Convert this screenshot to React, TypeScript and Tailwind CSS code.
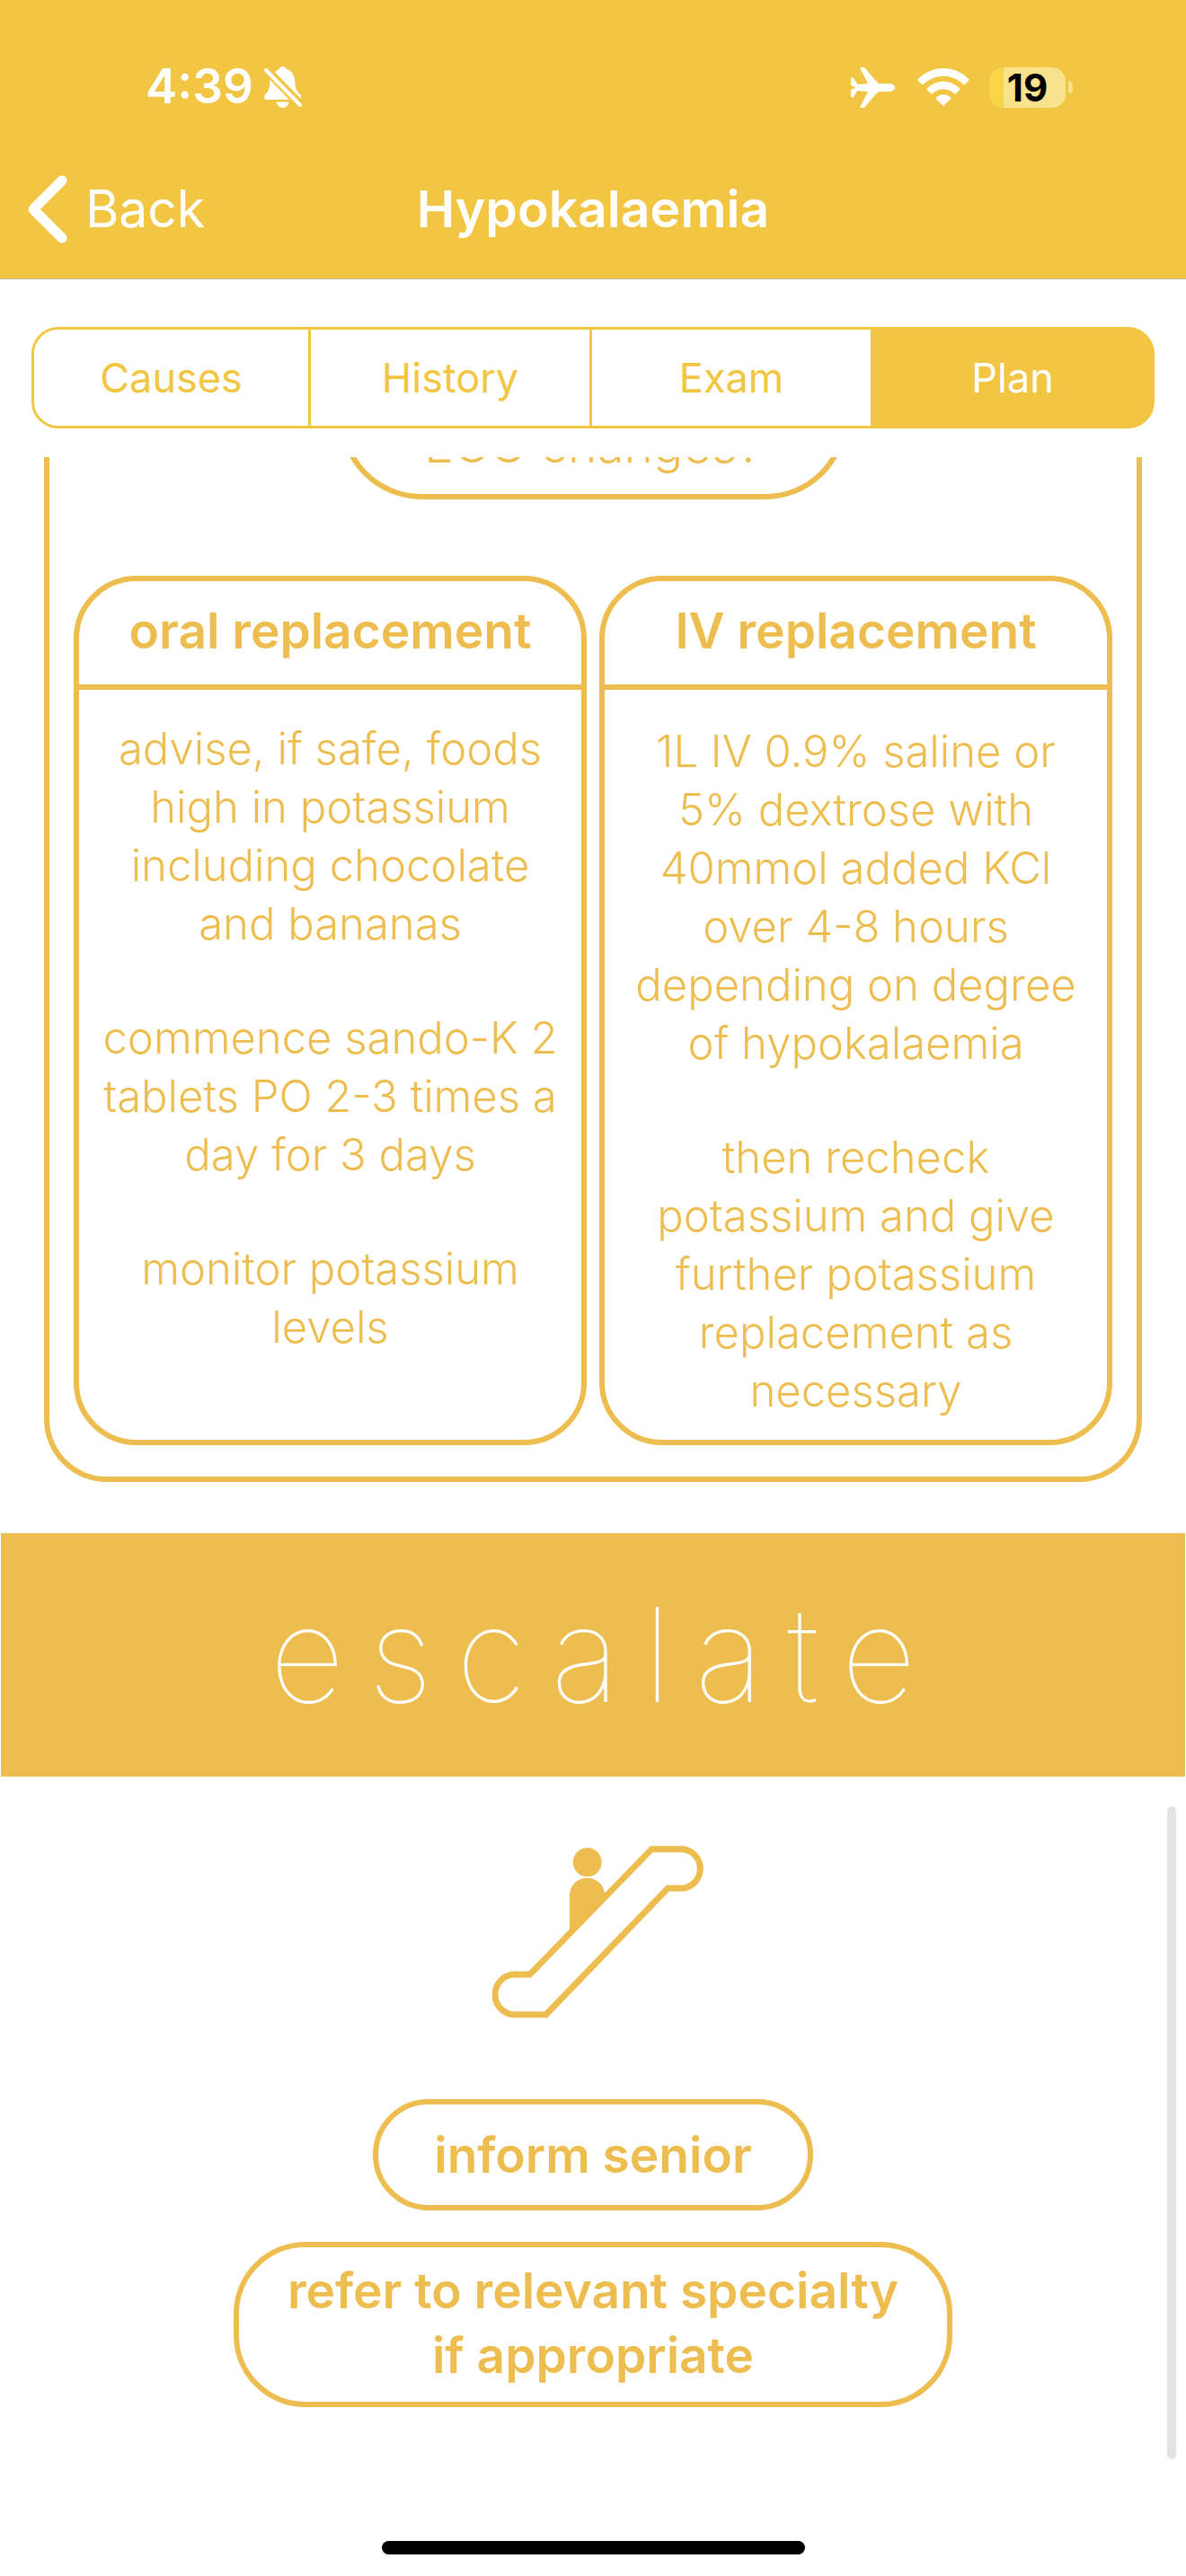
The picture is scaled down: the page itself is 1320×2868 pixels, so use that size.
import React from "react";

const tabs = ["Causes", "History", "Exam", "Plan"];

const plans = [
  {
    title: "oral replacement",
    bodyClass: "pt-[33px]",
    paragraphs: [
      ["advise, if safe, foods", "high in potassium", "including chocolate", "and bananas"],
      ["commence sando-K 2", "tablets PO 2-3 times a", "day for 3 days"],
      ["monitor potassium", "levels"],
    ],
  },
  {
    title: "IV replacement",
    bodyClass: "pt-[36px]",
    paragraphs: [
      [
        "1L IV 0.9% saline or",
        "5% dextrose with",
        "40mmol added KCl",
        "over 4-8 hours",
        "depending on degree",
        "of hypokalaemia",
      ],
      ["then recheck", "potassium and give", "further potassium", "replacement as", "necessary"],
    ],
  },
];

function BellOff() {
  return (
    <svg className="h-[46px] w-[42px]" viewBox="0 0 42 46" fill="#fff" aria-label="Silent mode">
      <path d="M12 6.500C14 4.500 15.500 3.800 16.500 3C17.300 1 18.800 0 20.700 0S24 1 25 3C31 5 34 10 34.300 17C34.500 24 36 27 39.500 30.500C41.500 32.500 41.500 34 40.500 35.500Z" />
      <path d="M6.300 14.500L28 37H3C1 37 0 36 0 34.300C0 32 1.500 31 3.500 28.500C6 25.500 6.500 21 6.300 14.500Z" />
      <path d="M13.800 39.500H27.500C27 43.500 24 46 20.700 46S14.300 43.500 13.800 39.500Z" />
      <path d="M2 4L40 43" stroke="#f2c643" strokeWidth="7" />
      <path d="M2 4L40 43" stroke="#fff" strokeWidth="4" strokeLinecap="round" />
    </svg>
  );
}

function Airplane() {
  return (
    <svg className="h-[45px] w-[50px]" viewBox="0 0 50 45" fill="#fff" aria-label="Airplane mode">
      <path d="M0 11.500H1.500C2.500 11.500 3 12 3.500 12.800L7.500 19L19 18L10.500 1.500C10 .600 10.500 0 11.500 0H13.500C14.600 0 15.300 .400 16 1.300L30.500 18H42C46 18 49 20 49 22.500S46 27 42 27H30.500L16 43.700C15.300 44.600 14.600 45 13.500 45H11.500C10.500 45 10 44.400 10.500 43.500L19 27L7.500 26L3.500 32.200C3 33 2.500 33.500 1.500 33.500H0V25L5.500 22.500L0 20Z" />
    </svg>
  );
}

function Wifi() {
  return (
    <svg className="h-[42px] w-[58px]" viewBox="0 0 58 42" fill="#fff" aria-label="Wi-Fi">
      <path d="M.700 12.200C17-4 41-4 57.300 12.200C57.800 12.700 57.800 13.200 57.300 13.700L53 18C52.400 18.600 51.900 18.500 51.400 18C38 5.800 20 5.800 6.600 18C6.100 18.500 5.600 18.600 5 18L.700 13.700C.200 13.200 .200 12.700 .700 12.200Z" />
      <path d="M10.800 22.500C21.500 12.200 36.500 12.200 47.200 22.500C47.700 23 47.700 23.500 47.200 24L42.800 28.200C42.300 28.700 41.700 28.700 41.200 28.200C34 21.700 24 21.700 16.800 28.200C16.300 28.700 15.700 28.700 15.200 28.200L10.800 24C10.300 23.500 10.300 23 10.800 22.500Z" />
      <path d="M20.800 32.500C25.500 28 32.500 28 37.200 32.500C37.700 33 37.700 33.500 37.200 34L29.700 41.500C29.200 42 28.800 42 28.300 41.500L20.800 34C20.300 33.500 20.300 33 20.800 32.500Z" />
    </svg>
  );
}

function Escalator() {
  return (
    <svg className="ml-3 h-[192px] w-[236px]" viewBox="84 105 708 576" aria-label="Escalator">
      <circle cx="401" cy="160" r="48" fill="#edbd4f" />
      <path d="M342 400V270A58.500 58 0 0 1 459 270L470 275Z" fill="#edbd4f" />
      <path
        d="M616 116H720A66 66 0 0 1 720 247H670L263 669H159A66 67 0 0 1 159 535H209Z"
        fill="#fff"
        stroke="#edbd4f"
        strokeWidth="21"
      />
    </svg>
  );
}

export default function App() {
  return (
    <div className="flex min-h-screen flex-col bg-white font-['Inter',sans-serif] text-[#edbd4f]">
      <header className="border-b border-[#b9b9a8] bg-[#f2c643] text-white">
        <div className="flex items-center justify-between pt-[60px] pr-[126px] pl-[162px]">
          <div className="flex h-[74px] items-center gap-3">
            <span className="text-[53px] font-semibold">4:39</span>
            <BellOff />
          </div>
          <div className="flex h-[74px] items-center">
            <Airplane />
            <div className="ml-6">
              <Wifi />
            </div>
            <div className="ml-[22px] flex h-[45px] w-[85px] items-center justify-center rounded-[15px] bg-[linear-gradient(90deg,#f7d548_16px,#f8e28c_16px)] text-[42px] font-bold text-black">
              19
            </div>
            <span className="ml-[3px] h-3.5 w-[5px] rounded-r-full bg-[#f8e28c]" />
          </div>
        </div>
        <nav className="grid h-[176px] grid-cols-[1fr_auto_1fr] items-center px-[30px] pt-[22px]">
          <button type="button" className="flex items-center gap-5 text-[57px]">
            <svg className="h-[76px] w-[45px]" viewBox="0 0 45 76" fill="none" aria-hidden="true">
              <path d="M39 6L7 38L39 70" stroke="#fff" strokeWidth="11" strokeLinecap="round" strokeLinejoin="round" />
            </svg>
            Back
          </button>
          <h1 className="text-[57px] font-semibold">Hypokalaemia</h1>
        </nav>
      </header>

      <div className="px-[35px] pt-[53px] pb-8">
        <div
          role="tablist"
          className="grid h-[113px] grid-cols-[308fr_313fr_313fr_310fr] divide-x-3 divide-[#f2c643] overflow-hidden rounded-[30px] border-3 border-[#f2c643] bg-[linear-gradient(90deg,#fff_50%,#f2c643_50%)] text-[45px] text-[#f2c643]"
        >
          {tabs.map((tab) => (
            <button
              key={tab}
              type="button"
              role="tab"
              aria-selected={tab === "Plan"}
              className="bg-white aria-selected:bg-[#f2c643] aria-selected:text-white"
            >
              {tab}
            </button>
          ))}
        </div>
      </div>

      <main className="relative overflow-hidden pb-[58px]">
        <section className="mx-[49px] rounded-b-[70px] border-6 border-t-0 border-[#edbd4f] px-[27px] pb-[35px]">
          <div className="mx-auto -mt-[135px] flex h-[182px] w-[565px] items-end justify-center rounded-[100px] border-6 border-[#edbd4f] pb-[22px] text-[55px] leading-[65px] font-light">
            ECG changes?
          </div>
          <div className="mt-[85px] grid grid-cols-2 gap-3.5 text-center">
            {plans.map((plan) => (
              <article key={plan.title} className="rounded-[70px] border-6 border-[#edbd4f] pb-[22px]">
                <h2 className="border-b-6 border-[#edbd4f] pt-[19px] pb-6 text-[55px] leading-[72px] font-semibold">
                  {plan.title}
                </h2>
                <div className={`flex flex-col gap-[62px] text-[49px] leading-[65px] font-light ${plan.bodyClass}`}>
                  {plan.paragraphs.map((lines) => (
                    <p key={lines[0]}>
                      {lines.map((line) => (
                        <span key={line} className="block whitespace-nowrap">
                          {line}
                        </span>
                      ))}
                    </p>
                  ))}
                </div>
              </article>
            ))}
          </div>
        </section>

        <h2 className="mx-px mt-[57px] flex h-[271px] items-center justify-center bg-[#edbd4f] pl-[26px] text-[146px] font-thin tracking-[26px] text-white">
          escalate
        </h2>

        <section className="flex flex-col items-center pt-[77px] text-center text-[55px] leading-[72px] font-semibold">
          <Escalator />
          <p className="mt-[90px] rounded-full border-6 border-[#edbd4f] px-[62px] py-5">inform senior</p>
          <p className="mt-[35px] rounded-[80px] border-6 border-[#edbd4f] px-[54px] pt-3 pb-4">
            refer to relevant specialty
            <br />
            if appropriate
          </p>
        </section>
        <div className="absolute right-[11px] bottom-0 h-[727px] w-2.5 rounded-full bg-[#e3e3e3]" />
      </main>

      <footer className="mt-auto flex justify-center pb-6">
        <div className="h-[15px] w-[471px] rounded-full bg-black" />
      </footer>
    </div>
  );
}
